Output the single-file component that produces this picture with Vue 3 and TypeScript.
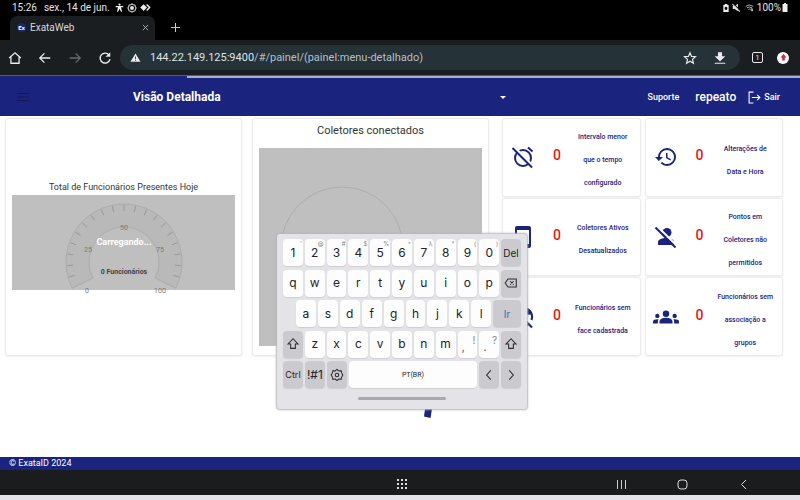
<script setup lang="ts">
interface Tile { icon: string; value: number; lines: string[] }
interface Key { label: string; hint?: string; kind?: string; name?: string }

const tiles: Tile[] = [
  { icon: 'alarm', value: 0, lines: ['Intervalo menor', 'que o tempo', 'configurado'] },
  { icon: 'history', value: 0, lines: ['Alterações de', 'Data e Hora'] },
  { icon: 'tablet', value: 0, lines: ['Coletores Ativos', 'Desatualizados'] },
  { icon: 'personOff', value: 0, lines: ['Pontos em', 'Coletores não', 'permitidos'] },
  { icon: 'faceOff', value: 0, lines: ['Funcionários sem', 'face cadastrada'] },
  { icon: 'groups', value: 0, lines: ['Funcionários sem', 'associação a', 'grupos'] },
]

const hints = ["'", '@', '#', '$', '%', '^', 'λ', '*', '(', ')']
const letters = (s: string): Key[] => s.split('').map((label) => ({ label }))

const rows: Key[][] = [
  [...'1234567890'.split('').map((label, i) => ({ label, hint: hints[i] })), { label: 'Del', kind: 'dark word' }],
  [...letters('qwertyuiop'), { label: '', kind: 'dark', name: 'backspace' }],
  [...letters('asdfghjkl'), { label: 'Ir', kind: 'dark go' }],
  [
    { label: '', kind: 'dark', name: 'shift' },
    ...letters('zxcvbnm'),
    { label: ',', hint: '!', kind: 'punct' },
    { label: '.', hint: '?', kind: 'punct' },
    { label: '', kind: 'dark', name: 'shift' },
  ],
  [
    { label: 'Ctrl', kind: 'dark ctrl' },
    { label: '!#1', kind: 'dark' },
    { label: '', kind: 'dark', name: 'settings' },
    { label: 'PT(BR)', kind: 'space' },
    { label: '', kind: 'dark', name: 'left' },
    { label: '', kind: 'dark', name: 'right' },
  ],
]

const keyIcons: Record<string, string> = {
  backspace: 'M7 5h14v14H7l-5-7zM10.500 9l6 6M16.500 9l-6 6',
  shift: 'M12 3L3.500 12H8v7.500h8V12h4.500z',
  settings:
    'M12 2.500l3 2.500 3.900-.4 1 3.800L22 12l-2.100 3.600-1 3.800-3.900-.4-3 2.500-3-2.500-3.900.4-1-3.800L2 12l2.100-3.600 1-3.800L9 5zM12 9a3 3 0 1 0 0 6a3 3 0 1 0 0-6z',
  left: 'M15 4l-7 8 7 8',
  right: 'M9 4l7 8-7 8',
}

const polar = (deg: number, r: number): [number, number] => {
  const a = ((deg - 90) * Math.PI) / 180
  return [111 + r * Math.cos(a), 67 + r * Math.sin(a)]
}
const ticks = Array.from({ length: 19 }, (_, i) => {
  const deg = -117 + 11.7 * (i + 1)
  const [x1, y1] = polar(deg, 57)
  const [x2, y2] = polar(deg, 51)
  return { x1, y1, x2, y2 }
})
const p = (deg: number, r: number) => polar(deg, r).map((n) => n.toFixed(1)).join(' ')
const band = `M${p(-117, 58)}A58 58 0 1 1 ${p(117, 58)}L${p(117, 35)}A35 35 0 1 0 ${p(-117, 35)}Z`
</script>

<template>
  <div class="screen">
    <div class="status">
      <span class="clock">15:26</span>
      <span class="date">sex., 14 de jun.</span>
      <svg class="i9" viewBox="0 0 24 24" fill="#eee"><circle cx="12" cy="4" r="3" /><path d="M2 8h20v3h-6l3 12h-3l-4-8-4 8H5l3-12H2z" /></svg>
      <svg class="i10 gap" viewBox="0 0 24 24" fill="none" stroke="#ddd" stroke-width="2.500"><path d="M12 2l3 2 4 1 1 4 2 3-2 3-1 4-4 1-3 2-3-2-4-1-1-4-2-3 2-3 1-4 4-1z" /><circle cx="12" cy="12" r="3.500" fill="#ddd" /></svg>
      <svg class="i11 gap" viewBox="0 0 28 24" fill="#eee"><path d="M9 3l9 9-9 9-9-9z" /><path d="M17 4l8 8-8 8" fill="none" stroke="#eee" stroke-width="4" /></svg>
      <span class="spacer"></span>
      <svg class="i8" viewBox="0 0 24 24" fill="#eee"><path fill-rule="evenodd" d="M4 3h4V0h8v3h4v21H4zM12 8a4 5 0 1 0 .1 0z" /></svg>
      <svg class="i9" viewBox="0 0 24 24" fill="#ddd"><path d="M2 8h5l9-6v20l-9-6H2z" /><path d="M3 1l20 20" stroke="#000" stroke-width="3" /><path d="M1 3l20 20" stroke="#ddd" stroke-width="3" /></svg>
      <svg class="i11" viewBox="0 0 24 24" fill="none" stroke="#bbb" stroke-width="2.500"><path d="M2 9q10-8 20 0M5 13q7-5 14 0M9 17q3-2 6 0M17 14v8M20 22v-7" /></svg>
      <span class="battery">100%</span>
      <svg class="cell" viewBox="0 0 6 9" fill="#eee"><path d="M2 0h2v1h1.500v8h-5V1H2z" /></svg>
    </div>

    <div class="tabs">
      <div class="tab">
        <span class="favicon">Ex</span>
        <span class="tabname">ExataWeb</span>
        <button type="button" aria-label="Fechar guia"><svg class="i7" viewBox="0 0 8 8" stroke="#bbb"><path d="M1 1l6 6M7 1l-6 6" /></svg></button>
      </div>
      <button type="button" class="plus" aria-label="Nova guia"><svg class="i9" viewBox="0 0 9 9" stroke="#ccc"><path d="M4.500 0v9M0 4.500h9" /></svg></button>
    </div>

    <div class="toolbar">
      <button type="button" aria-label="Início"><svg class="i14" viewBox="0 0 24 24" fill="none" stroke="#e8eaed" stroke-width="2.200"><path d="M2 12L12 3l10 9M5 10v11h14V10" /></svg></button>
      <button type="button" aria-label="Voltar"><svg class="i14" viewBox="0 0 24 24" fill="none" stroke="#e8eaed" stroke-width="2.200"><path d="M21 12H4M11 4l-8 8 8 8" /></svg></button>
      <button type="button" aria-label="Avançar"><svg class="i14" viewBox="0 0 24 24" fill="none" stroke="#686b6e" stroke-width="2.200"><path d="M3 12h17M13 4l8 8-8 8" /></svg></button>
      <button type="button" aria-label="Recarregar"><svg class="i14" viewBox="0 0 24 24" fill="none" stroke="#e8eaed" stroke-width="2.400"><path d="M19 7a8.500 8.500 0 1 0 1.500 7" /><path d="M21 2v8h-8z" fill="#e8eaed" stroke="none" /></svg></button>
      <div class="address">
        <svg class="i11" viewBox="0 0 24 24"><path fill="#e8eaed" d="M12 3L23 21H1z" /><path stroke="#253238" stroke-width="2" d="M12 10v5M12 17v2" /></svg>
        <span class="url"><b>144.22.149.125:9400</b>/#/painel/(painel:menu-detalhado)</span>
        <button type="button" aria-label="Favorito"><svg class="i14" viewBox="0 0 24 24" fill="none" stroke="#e8eaed" stroke-width="2"><path d="M12 3l2.700 6.300 6.800.6-5.200 4.500 1.600 6.700-5.900-3.600-5.900 3.600 1.600-6.700-5.200-4.500 6.800-.6z" /></svg></button>
        <button type="button" aria-label="Baixar"><svg class="i14" viewBox="0 0 24 24" fill="#e8eaed"><path d="M8.500 2h7v7H21l-9 9-9-9h5.500zM3 20h18v2H3z" /></svg></button>
      </div>
      <button type="button" class="count" aria-label="Guias">1</button>
      <button type="button" class="update" aria-label="Atualizar"><svg class="i7" viewBox="0 0 8 8" fill="#c5303a"><path d="M4 0l3.500 4H5.500v3.500h-3V4h-2z" /></svg></button>
    </div>

    <header class="appbar">
      <div class="progress"></div>
      <button type="button" aria-label="Menu"><svg class="menu" viewBox="0 0 12 10" stroke="#131858" stroke-width="1"><path d="M0 1.500h12M0 5h12M0 8.500h12" /></svg></button>
      <h1>Visão Detalhada</h1>
      <button type="button" class="caret" aria-label="Selecionar"><svg viewBox="0 0 6 3" fill="#fff"><path d="M0 0h6L3 3z" /></svg></button>
      <a href="#">Suporte</a>
      <span class="user">repeato</span>
      <a href="#" class="exit"><svg viewBox="0 0 24 24" fill="none" stroke="#fff" stroke-width="2"><path d="M10 2H2v20h8M7 12h15M17 7l5 5-5 5" /></svg>Sair</a>
    </header>

    <main class="board">
      <section class="card gauge">
        <h2>Total de Funcionários Presentes Hoje</h2>
        <div class="loading">
          <svg viewBox="0 0 222 95">
            <path :d="band" fill="#b9b9b9" stroke="#acacac" stroke-width="1" />
            <line v-for="(t, i) in ticks" :key="i" v-bind="t" stroke="#999" stroke-width="1" />
            <g class="scale">
              <text x="74" y="98">0</text><text x="75" y="57">25</text><text x="111" y="35">50</text>
              <text x="147" y="57">75</text><text x="147" y="98">100</text>
            </g>
            <text class="total" x="111" y="79">0 Funcionários</text>
            <text class="wait" x="111" y="50">Carregando...</text>
          </svg>
        </div>
      </section>

      <section class="card pie">
        <h2>Coletores conectados</h2>
        <div class="loading">
          <svg viewBox="0 0 222 198"><circle cx="82" cy="100" r="61" fill="none" stroke="#adadad" stroke-width="1" /></svg>
        </div>
      </section>

      <section class="tiles">
        <article v-for="(t, i) in tiles" :key="i" class="card tile">
          <svg v-if="t.icon === 'alarm'" viewBox="0 0 24 24" fill="none" stroke="#1a237e" stroke-width="2"><circle cx="12" cy="13" r="8" /><path d="M17 2.500l4.500 4M6 3.200L5 4" /><path d="M3 2l19 19.500" stroke="#fff" stroke-width="3" /><path d="M1.500 3l19.500 19.500" /></svg>
          <svg v-else-if="t.icon === 'history'" viewBox="0 0 24 24" fill="#1a237e"><path d="M13 3a9 9 0 0 0-9 9H1l3.890 3.890.07.14L9 12H6c0-3.870 3.130-7 7-7s7 3.130 7 7-3.130 7-7 7c-1.930 0-3.680-.79-4.940-2.060l-1.420 1.420A8.950 8.950 0 0 0 13 21a9 9 0 0 0 0-18zm-1 5v5l4.280 2.540.72-1.210-3.500-2.080V8z" /></svg>
          <svg v-else-if="t.icon === 'tablet'" viewBox="0 0 24 24" fill="#1a237e"><path fill-rule="evenodd" d="M6 1h12a2 2 0 0 1 2 2v18a2 2 0 0 1-2 2H6a2 2 0 0 1-2-2V3a2 2 0 0 1 2-2zm0 4v14h12V5z" /></svg>
          <svg v-else-if="t.icon === 'personOff'" viewBox="0 0 24 24" fill="#1a237e"><circle cx="13" cy="7.500" r="4.500" /><path d="M4 20v-3c0-3 5-4 8-4s8 1 8 4v3z" /><path d="M3.500 1.500l20 20" stroke="#fff" stroke-width="2" /><path d="M1.500 2.500l20 20" stroke="#1a237e" stroke-width="2" /></svg>
          <svg v-else-if="t.icon === 'faceOff'" viewBox="0 0 24 24" fill="none" stroke="#1a237e"><path d="M6 5.200a9 9 0 0 1 14.500 9.800M18 18.700A9 9 0 0 1 4.500 7" stroke-width="2.200" /><path d="M9 4q4 6 11 5V7L14 3z" fill="#1a237e" /><path d="M2 3l19 19.500" stroke-width="2" /></svg>
          <svg v-else class="wide" viewBox="0 0 24 24" fill="#1a237e"><path d="M12 12.750c1.630 0 3.070.39 4.240.9 1.080.48 1.760 1.560 1.760 2.730V18H6v-1.610c0-1.180.68-2.260 1.760-2.730 1.170-.52 2.610-.91 4.240-.91zM4 13a2 2 0 1 0 0-4 2 2 0 0 0 0 4zm1.130 1.100A6.950 6.950 0 0 0 4 14c-.99 0-1.930.21-2.780.58A2.010 2.010 0 0 0 0 16.430V18h4.500v-1.610c0-.83.23-1.610.63-2.290zM20 13a2 2 0 1 0 0-4 2 2 0 0 0 0 4zm4 3.430c0-.81-.48-1.530-1.220-1.850a6.950 6.950 0 0 0-3.910-.48c.4.68.63 1.460.63 2.290V18H24zM12 6a3 3 0 1 1 0 6 3 3 0 0 1 0-6z" /></svg>
          <strong>{{ t.value }}</strong>
          <p><span v-for="l in t.lines" :key="l">{{ l }}</span></p>
        </article>
      </section>
    </main>

    <footer class="foot">© ExataID 2024</footer>

    <nav class="system">
      <button type="button" class="apps" aria-label="Aplicativos"><svg viewBox="0 0 11 11" fill="#ddd"><template v-for="y in 3" :key="y"><rect v-for="x in 3" :key="x" :x="x * 4 - 4" :y="y * 4 - 4" width="2" height="2" /></template></svg></button>
      <button type="button" aria-label="Recentes"><svg viewBox="0 0 11 11" stroke="#ccc"><path d="M1.500 1v9M5.500 1v9M9.500 1v9" /></svg></button>
      <button type="button" aria-label="Tela inicial"><svg viewBox="0 0 11 11" fill="none" stroke="#ddd"><rect x="1" y="1" width="9" height="9" rx="3" /></svg></button>
      <button type="button" aria-label="Retornar"><svg viewBox="0 0 11 11" fill="none" stroke="#ddd"><path d="M8 1L3.500 5.500 8 10" /></svg></button>
    </nav>

    <svg class="spinner" viewBox="0 0 8 9" fill="#1a237e"><path d="M1 0h7L6.500 9 0 7.500z" /></svg>

    <div class="keyboard">
      <div class="keys">
        <div v-for="(row, r) in rows" :key="r" class="row" :class="{ inset: r === 2 }">
          <button v-for="(k, i) in row" :key="i" type="button" :class="['key', k.kind]" :aria-label="k.name">
            <svg v-if="k.name" viewBox="0 0 24 24" fill="none" stroke="#2b2b30" stroke-width="1.800"><path :d="keyIcons[k.name]" /></svg>
            <template v-else>{{ k.label }}</template>
            <span v-if="k.hint" class="hint">{{ k.hint }}</span>
          </button>
        </div>
      </div>
      <div class="handle"></div>
    </div>
  </div>
</template>

<style>
body { margin: 0; background: #fff; }
</style>

<style scoped>
* { box-sizing: border-box; }
.screen { position: relative; min-height: 100vh; display: flex; flex-direction: column; font-family: Roboto, "Liberation Sans", sans-serif; color: #333; overflow: hidden; border-bottom: 5px solid #e4e4ea; }
button { border: 0; padding: 0; margin: 0; background: none; font: inherit; color: inherit; display: flex; align-items: center; justify-content: center; }
svg { display: block; flex: none; }
h1, h2, p { margin: 0; font-weight: 400; }
a { color: inherit; text-decoration: none; }
.i7 { width: 7px; height: 7px; }
.i8 { width: 8px; height: 8px; }
.i9 { width: 9px; height: 9px; }
.i10 { width: 10px; height: 10px; }
.i11 { width: 11px; height: 9px; }
.i14 { width: 14px; height: 14px; }
.spacer { flex: 1; }

.status { height: 15px; display: flex; align-items: center; padding: 0 12px 0 12px; background: #000; color: #e4e4e4; font-size: 10px; }
.date { margin: 0 5px 0 7px; }
.gap { margin-left: 3px; }
.status .i8 { margin-right: 2px; }
.spacer ~ .i11 { margin-left: 3px; }
.battery { margin: 0 1px 0 2px; }
.cell { width: 6px; height: 9px; }

.tabs { height: 25px; display: flex; align-items: flex-end; padding-left: 10px; background: #000; color: #d5d8da; }
.tab { width: 145px; height: 24px; display: flex; align-items: center; padding: 0 6px 2px 7px; background: #1a1e21; border-radius: 7px 7px 0 0; }
.favicon { width: 9px; height: 9px; border-radius: 5px; background: #1e2672; color: #fff; font-size: 6px; line-height: 9px; text-align: center; font-weight: 700; }
.tabname { flex: 1; margin-left: 4px; font-size: 10px; }
.plus { width: 40px; height: 26px; }

.toolbar { height: 35px; display: flex; align-items: center; padding: 0 7px 0 0; background: #1a1e20; color: #e8eaed; }
.toolbar > button { width: 30px; height: 30px; }
.address { flex: 1; height: 25px; display: flex; align-items: center; padding: 0 5px 0 10px; border-radius: 13px; background: #253238; }
.address .i11 { height: 11px; }
.address button { width: 30px; }
.url { flex: 1; padding-left: 9px; font-size: 11px; color: #b5bfc4; white-space: nowrap; }
.url b { font-weight: 400; color: #dfe4e6; }
.toolbar > .count { width: 11px; height: 11px; margin: 0 14px 0 12px; border: 1px solid #e8eaed; border-radius: 2px; font-size: 7px; }
.toolbar > .update { width: 12px; height: 12px; margin-right: 4px; border-radius: 6px; background: #fff; }

.appbar { position: relative; height: 41px; display: flex; align-items: center; padding: 2px 20px 0 17px; background: #1a237e; border-top: 1px solid #555b78; color: #fff; font-size: 9px; font-weight: 500; }
.progress { position: absolute; left: 187px; right: 0; top: 0; height: 2px; background: #a9aed6; }
.menu { width: 12px; height: 10px; }
.appbar h1 { margin-left: 104px; font-size: 12px; font-weight: 700; }
.caret { margin: 0 142px 0 auto; }
.caret svg { width: 6px; height: 3px; }
.user { margin: 0 12px 0 16px; font-size: 12px; }
.exit { display: flex; align-items: center; gap: 3px; }
.exit svg { width: 13px; height: 13px; }

.board { flex: 1; display: grid; grid-template-columns: 235fr 235fr 282fr; grid-template-rows: 236px; gap: 12px; padding: 3px 18px 0 6px; }
.card { background: #fff; border-radius: 2px; box-shadow: 0 0 1px 1px #ececee, 0 1px 3px #ddd; }
.gauge { display: flex; flex-direction: column; justify-content: center; padding: 0 6px 5px; }
.gauge h2 { font-size: 9px; line-height: 16px; text-align: center; }
.loading { background: #bfbfbf; display: flex; justify-content: center; }
.gauge .loading svg { width: 222px; height: 95px; overflow: visible; }
.scale { font-size: 7px; fill: #777; text-anchor: middle; }
.total { font-size: 7px; font-weight: 700; fill: #444; text-anchor: middle; }
.wait { font-size: 9px; font-weight: 700; fill: #fff; text-anchor: middle; }
.pie { padding: 0 6px; }
.pie h2 { font-size: 11px; line-height: 23px; padding-bottom: 6px; text-align: center; }
.pie .loading svg { width: 222px; height: 198px; }

.tiles { display: grid; grid-template-columns: 1fr 1fr; grid-template-rows: repeat(3, minmax(0, 1fr)); gap: 3px 6px; padding-left: 3px; }
.tile { display: grid; grid-template-columns: 40px 28px 1fr; align-items: center; justify-items: center; padding-right: 5px; color: #1a237e; }
.tile svg { width: 24px; height: 24px; }
.tile svg.wide { width: 26px; height: 26px; }
.tile strong { padding-bottom: 4px; color: #e8161b; font-size: 14px; font-weight: 500; }
.tile p { padding-top: 7px; font-size: 7px; line-height: 23px; font-weight: 500; text-align: center; white-space: nowrap; }
.tile span { display: block; }

.foot { height: 13px; padding-left: 9px; background: #1a237e; color: #fff; font-size: 9px; line-height: 12px; }
.system { height: 25px; display: flex; align-items: center; justify-content: flex-end; gap: 50px; padding: 4px 51px 0 0; background: #1a1c1e; }
.system svg { width: 11px; height: 11px; }
.apps { margin-right: 158px; }

.spinner { position: absolute; left: 424px; top: 409px; width: 8px; height: 9px; }
.keyboard { position: absolute; left: 277px; top: 234px; width: 250px; height: 175px; padding: 5px 6px 0 6px; border-radius: 3px; background: #e4e4e8; box-shadow: 0 0 2px 1px #b5b5b8; color: #222226; font-family: Inter, Roboto, sans-serif; }
.keys { height: 149px; display: flex; flex-direction: column; justify-content: space-between; }
.row { display: flex; gap: 2px; }
.inset { padding-left: 13px; }
.key { position: relative; flex: 20 1 0; min-width: 0; height: 27px; border-radius: 4px; background: #fdfdfe; box-shadow: 0 1px 1px #cdcdd2; font-size: 12px; line-height: 14px; }
.key svg { width: 14px; height: 14px; }
.dark { background: #cbcbcf; }
.word { font-size: 10px; }
.ctrl { font-size: 9px; }
.go { flex-grow: 28; color: #3b68b8; font-size: 10px; }
.space { flex-grow: 129; font-family: Roboto, sans-serif; font-size: 7px; }
.hint { position: absolute; top: 1px; right: 1px; font-size: 6px; line-height: 8px; color: #85858c; }
.punct { align-items: flex-end; justify-content: flex-start; padding-bottom: 4px; text-indent: 4px; color: #66666c; }
.punct .hint { top: 3px; right: 2px; font-size: 10px; line-height: 12px; }
.handle { width: 88px; height: 3px; margin: 9px auto 0; border-radius: 2px; background: #aaaaae; }
</style>
